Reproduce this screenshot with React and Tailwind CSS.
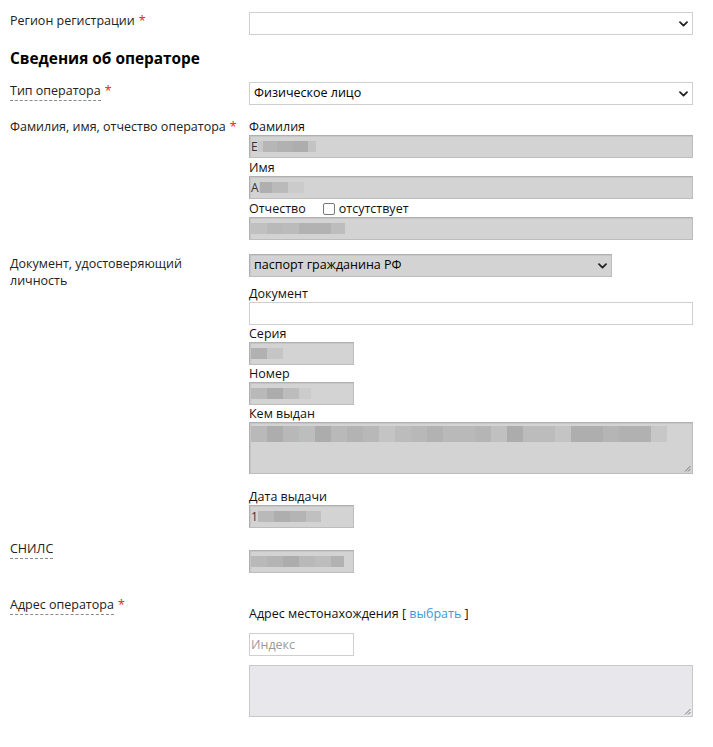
import React from 'react';

const Chevron = ({ className }) => (
  <svg
    className={className}
    width="9"
    height="6"
    viewBox="0 0 9 6"
    fill="none"
    stroke="#222"
    strokeWidth="1.8"
    strokeLinecap="round"
    strokeLinejoin="round"
  >
    <path d="M1 1.2l3.5 3.4 3.5-3.4" />
  </svg>
);

// masked personal data: a row of grey pixel blocks in place of the value
const Masked = ({ lead, blocks, tall }) => (
  <div className={tall ? 'flex items-start pl-[1px]' : 'flex items-center h-full pl-[1px]'}>
    {lead && <span className="text-[#333] text-[12px] leading-none">{lead}</span>}
    {blocks.map(([w, c], i) => (
      <span
        key={i}
        className={tall ? 'block h-[16px]' : 'block h-[11px]'}
        style={{ width: w, background: c }}
      />
    ))}
  </div>
);

const Req = () => <span className="text-[#e3241b] ml-1">*</span>;

const Hint = ({ children }) => (
  <span className="border-b border-dashed border-[#8a8a8a] pb-[1px]">{children}</span>
);

const GreyBox = ({ className = '', children }) => (
  <div
    className={`h-[23px] bg-[#d3d3d3] border border-[#bdbdbd] border-t-[#b0b0b0] border-l-[#b0b0b0] shadow-[inset_1px_1px_0_#c6c6c6] ${className}`}
  >
    {children}
  </div>
);

const SubLabel = ({ children }) => (
  <div className="leading-[17px] text-[#111]">{children}</div>
);

const Grip = () => (
  <svg className="absolute right-[1px] bottom-[1px]" width="7" height="7" viewBox="0 0 7 7" stroke="#777" strokeWidth="1">
    <path d="M1 6.5L6.5 1M4 6.5L6.5 4" />
  </svg>
);

const App = () => {
  return (
    <div className="w-[713px] min-h-[747px] bg-white text-[#222] text-[12.5px] font-['Open_Sans',_'Liberation_Sans',_sans-serif] pl-[10px]">
      {/* регион */}
      <div className="grid grid-cols-[239px_444px] pt-[12px]">
        <div className="pt-[1px] leading-[16px]">
          Регион регистрации
          <Req />
        </div>
        <div className="relative h-[23px] border border-[#cfcfcf] bg-white">
          <Chevron className="absolute right-[4px] top-[8px]" />
        </div>
      </div>

      <h2 className="mt-[14px] text-[15.4px] leading-[20px] font-bold text-black">
        Сведения об операторе
      </h2>

      {/* тип оператора */}
      <div className="grid grid-cols-[239px_444px] mt-[13px]">
        <div className="leading-[16px] pt-[1px]">
          <Hint>Тип оператора</Hint>
          <Req />
        </div>
        <div className="relative h-[23px] border border-[#cfcfcf] bg-white flex items-center pl-[4px] text-black">
          Физическое лицо
          <Chevron className="absolute right-[4px] top-[8px]" />
        </div>
      </div>

      {/* ФИО */}
      <div className="grid grid-cols-[239px_444px] mt-[13px]">
        <div className="leading-[17px]">
          Фамилия, имя, отчество оператора
          <Req />
        </div>
        <div className="flex flex-col gap-[1px]">
          <div>
            <SubLabel>Фамилия</SubLabel>
            <GreyBox>
              <Masked
                lead="Е"
                blocks={[
                  [5, '#c9c9c9'],
                  [14, '#b6b6b6'],
                  [16, '#b1b1b1'],
                  [15, '#aeadad'],
                  [8, '#c3c3c3'],
                ]}
              />
            </GreyBox>
          </div>
          <div>
            <SubLabel>Имя</SubLabel>
            <GreyBox>
              <Masked
                lead="А"
                blocks={[
                  [1, '#c9c9c9'],
                  [12, '#afafaf'],
                  [16, '#bababa'],
                  [16, '#cbcbcb'],
                ]}
              />
            </GreyBox>
          </div>
          <div>
            <div className="flex items-center leading-[17px] text-[#111]">
              Отчество
              <span className="inline-block w-[12px] h-[12px] border border-[#777] rounded-[2px] bg-white ml-[17px] mr-[4px]" />
              отсутствует
            </div>
            <GreyBox>
              <Masked
                blocks={[
                  [16, '#c0c0c0'],
                  [16, '#b9b9b9'],
                  [16, '#bbbbbb'],
                  [32, '#b2b2b2'],
                  [14, '#bdbdbd'],
                ]}
              />
            </GreyBox>
          </div>
        </div>
      </div>

      {/* документ */}
      <div className="grid grid-cols-[239px_444px] mt-[14px]">
        <div className="leading-[17px] pt-[1px] pr-[60px]">Документ, удостоверяющий личность</div>
        <div>
          <GreyBox className="relative w-[363px] flex items-center pl-[4px] text-black">
            паспорт гражданина РФ
            <Chevron className="absolute right-[4px] top-[8px]" />
          </GreyBox>
          <div className="mt-[8px]">
            <SubLabel>Документ</SubLabel>
            <div className="h-[23px] border border-[#cfcfcf] bg-white" />
          </div>
          <div>
            <SubLabel>Серия</SubLabel>
            <GreyBox className="w-[105px]">
              <Masked
                blocks={[
                  [16, '#b1b1b1'],
                  [16, '#c5c5c5'],
                ]}
              />
            </GreyBox>
          </div>
          <div>
            <SubLabel>Номер</SubLabel>
            <GreyBox className="w-[105px]">
              <Masked
                blocks={[
                  [16, '#b9b9b9'],
                  [16, '#acacac'],
                  [16, '#bcbcbc'],
                  [12, '#cbcbcb'],
                ]}
              />
            </GreyBox>
          </div>
          <div>
            <SubLabel>Кем выдан</SubLabel>
            <div className="relative h-[52px] bg-[#d3d3d3] border border-[#bdbdbd] border-t-[#b0b0b0] border-l-[#b0b0b0] shadow-[inset_1px_1px_0_#c6c6c6] pt-[3px]">
              <Masked
                tall
                blocks={[
                  [16, '#b9b9b9'],
                  [16, '#adadad'],
                  [16, '#b8b8b8'],
                  [16, '#bcbdbd'],
                  [16, '#acacac'],
                  [16, '#b9b9b9'],
                  [16, '#b3b3b3'],
                  [16, '#b8b8b8'],
                  [16, '#c4c4c4'],
                  [16, '#bcbcbc'],
                  [16, '#b8b8b8'],
                  [16, '#b2b2b2'],
                  [32, '#b9b9b9'],
                  [16, '#b5b5b5'],
                  [16, '#c0c0c0'],
                  [16, '#acacac'],
                  [32, '#bcbcbc'],
                  [16, '#c4c4c4'],
                  [32, '#aeaeae'],
                  [16, '#b5b5b5'],
                  [32, '#b1b1b1'],
                  [16, '#c7c7c7'],
                ]}
              />
              <Grip />
            </div>
          </div>
          <div className="mt-[14px]">
            <SubLabel>Дата выдачи</SubLabel>
            <GreyBox className="w-[105px]">
              <Masked
                lead="1"
                blocks={[
                  [16, '#b9b9b9'],
                  [16, '#aeaeae'],
                  [16, '#b4b4b4'],
                  [15, '#c0c0c0'],
                ]}
              />
            </GreyBox>
          </div>
        </div>
      </div>

      {/* СНИЛС */}
      <div className="grid grid-cols-[239px_444px] mt-[13px]">
        <div className="leading-[16px]">
          <Hint>СНИЛС</Hint>
        </div>
        <div className="pt-[9px]">
          <GreyBox className="w-[105px]">
            <Masked
              blocks={[
                [16, '#b9b9b9'],
                [16, '#b4b4b4'],
                [16, '#adadad'],
                [16, '#b9b9b9'],
                [16, '#bdbdbd'],
                [13, '#b2b2b2'],
              ]}
            />
          </GreyBox>
        </div>
      </div>

      {/* адрес */}
      <div className="grid grid-cols-[239px_444px] mt-[24px]">
        <div className="leading-[16px]">
          <Hint>Адрес оператора</Hint>
          <Req />
        </div>
        <div className="pt-[9px]">
          <div className="leading-[16px] text-[#111]">
            Адрес местонахождения [ <span className="text-[#3d9ad6]">выбрать</span> ]
          </div>
          <input
            readOnly
            placeholder="Индекс"
            className="block mt-[11px] w-[105px] h-[23px] border border-[#cfcfcf] bg-white px-[1px] text-[12.5px] placeholder:text-[#9a9a9a] outline-none"
          />
          <div className="relative mt-[9px] h-[52px] bg-[#e8e8ec] border border-[#c8c8c8]">
            <Grip />
          </div>
        </div>
      </div>
    </div>
  );
};

export default App;
